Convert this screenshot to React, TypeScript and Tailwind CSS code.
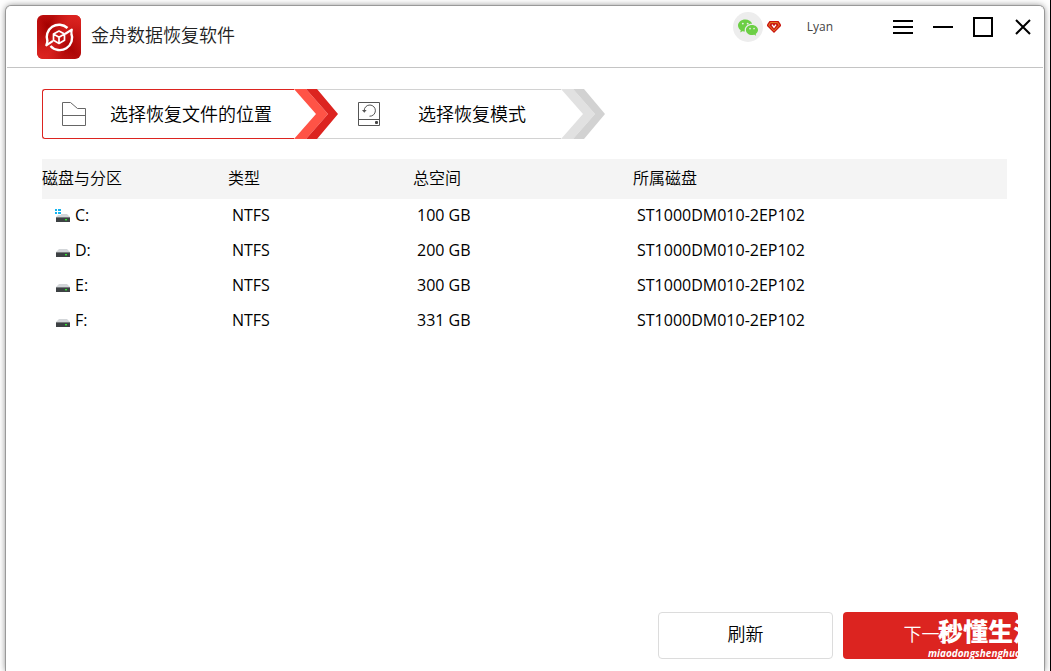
import { BsWechat } from "react-icons/bs";

const disks = [
  { name: "C:", type: "NTFS", size: "100 GB", model: "ST1000DM010-2EP102", system: true },
  { name: "D:", type: "NTFS", size: "200 GB", model: "ST1000DM010-2EP102", system: false },
  { name: "E:", type: "NTFS", size: "300 GB", model: "ST1000DM010-2EP102", system: false },
  { name: "F:", type: "NTFS", size: "331 GB", model: "ST1000DM010-2EP102", system: false },
];

const Logo = () => (
  <svg width="44" height="44" viewBox="0 0 44 44" fill="none" aria-hidden="true">
    <defs>
      <linearGradient id="logo-bg" x1="0" y1="8" x2="44" y2="36" gradientUnits="userSpaceOnUse">
        <stop offset="0" stopColor="#b80a0a" />
        <stop offset="0.2" stopColor="#a30000" />
        <stop offset="0.5" stopColor="#c91817" />
        <stop offset="0.75" stopColor="#a80202" />
        <stop offset="1" stopColor="#b00808" />
      </linearGradient>
      <linearGradient id="logo-top" x1="44" y1="0" x2="22" y2="22" gradientUnits="userSpaceOnUse">
        <stop offset="0" stopColor="#e02622" />
        <stop offset="1" stopColor="#e02622" stopOpacity="0" />
      </linearGradient>
      <linearGradient id="logo-bottom" x1="0" y1="44" x2="22" y2="22" gradientUnits="userSpaceOnUse">
        <stop offset="0" stopColor="#e02622" />
        <stop offset="1" stopColor="#e02622" stopOpacity="0" />
      </linearGradient>
    </defs>
    <rect width="44" height="44" rx="6" fill="url(#logo-bg)" />
    <rect width="44" height="44" rx="6" fill="url(#logo-top)" />
    <rect width="44" height="44" rx="6" fill="url(#logo-bottom)" />
    <g stroke="#fff" strokeLinejoin="round">
      <path d="M30.5 13A12.4 12.4 0 0 0 10.5 26.5" strokeWidth="2.4" />
      <path d="M13.5 31A12.4 12.4 0 0 0 34.2 18" strokeWidth="2.4" />
      <path d="M10.5 26L9.3 30.3L16 25.8M34.2 18L34.8 14.6L28 19" strokeWidth="2.2" />
      <path d="M22 16L27.5 19V25.3L22 28.5L16.5 25.3V19ZM16.5 19L22 22.2L27.5 19M22 22.2V28.5" strokeWidth="1.7" />
    </g>
  </svg>
);

const Gem = () => (
  <svg width="14" height="12" viewBox="0 0 14 12" aria-hidden="true">
    <path d="M2.5 0H11.5L14 3.5V5L7 12L0 5V3.5Z" fill="#c9150f" />
    <path d="M3.5 1.6H10.5L12.2 4.2L7 9.8L1.8 4.2Z" fill="none" stroke="#f0a62e" strokeWidth="0.8" />
    <path d="M5 3.6L7 6.4L9 3.6" fill="none" stroke="#fff" strokeWidth="1.3" />
  </svg>
);

const FolderIcon = () => (
  <svg width="24" height="24" viewBox="0 0 24 24" fill="none" stroke="#666" aria-hidden="true">
    <path d="M.5 .5H8.5L15.5 6.5H23.5V23.5H.5ZM.5 13.5H23.5" />
  </svg>
);

const RestoreIcon = () => (
  <svg width="22" height="24" viewBox="0 0 22 24" fill="none" stroke="#555" aria-hidden="true">
    <path d="M.5 .5H21.5V23.5H.5ZM.5 17.5H21.5" />
    <path d="M6.2 8.5A5.6 5.6 0 1 1 11.5 14.2" />
    <path d="M4 8H8.6L6.3 10.8Z" fill="#555" stroke="none" />
    <rect x="17" y="19" width="3" height="3" rx="1" fill="#444" stroke="none" />
  </svg>
);

const StepArrow = ({ light, dark }: { light: string; dark: string }) => (
  <svg className="relative z-10 shrink-0" width="44" height="50" viewBox="0 0 44 50" aria-hidden="true">
    <path d="M0 0H12L34 25L12 50H0L22 25Z" fill={light} />
    <path d="M12 0H23L44 25L23 50H12L34 25Z" fill={dark} />
  </svg>
);

const DriveIcon = ({ system }: { system: boolean }) => (
  <svg width="16" height="16" viewBox="0 0 16 16" className="shrink-0" aria-hidden="true">
    <path d="M4 7H12L15 10H1Z" fill="#d3d6d9" />
    <path d="M1 10H15V15H1Z" fill="#3d4144" />
    <path d="M1 10H15V11H1Z" fill="#777b7e" />
    <rect x="10" y="12" width="2" height="1.4" fill="#32e632" />
    {system && (
      <g>
        <path d="M0 1H6V8H0Z" fill="#fff" />
        <path d="M0 2H2V4H0ZM3 2H6V4H3ZM0 5H2V7H0ZM3 5H6V7H3Z" fill="#13b4f0" />
      </g>
    )}
  </svg>
);

const TitleBar = () => (
  <header className="flex h-[61px] items-start justify-between border-b border-[#c4c4c4]">
    <div className="flex h-[60px] items-center gap-[10px] pl-[30px]">
      <Logo />
      <h1 className="pb-1 text-[18px] font-[350] leading-6 text-[#222]">金舟数据恢复软件</h1>
    </div>
    <div className="flex h-10 items-center">
      <button type="button" aria-label="WeChat" className="flex size-[30px] items-center justify-center rounded-full bg-[#ededed]">
        <BsWechat size={20} className="text-[#6ccf45]" />
      </button>
      <span className="ml-1">
        <Gem />
      </span>
      <span className="mr-[50px] ml-[26px] text-[12px] text-[#444]">Lyan</span>
      <button type="button" aria-label="Menu" className="flex size-10 items-center justify-center">
        <svg width="20" height="14" viewBox="0 0 20 14">
          <path d="M0 0H20V2H0ZM0 6H20V8H0ZM0 12H20V14H0Z" />
        </svg>
      </button>
      <button type="button" aria-label="Minimize" className="flex size-10 items-center justify-center">
        <svg width="20" height="2" viewBox="0 0 20 2">
          <path d="M0 0H20V2H0Z" />
        </svg>
      </button>
      <button type="button" aria-label="Maximize" className="flex size-10 items-center justify-center">
        <svg width="20" height="20" viewBox="0 0 20 20" fill="none" stroke="#000" strokeWidth="2">
          <path d="M1 1H19V19H1Z" />
        </svg>
      </button>
      <button type="button" aria-label="Close" className="flex size-10 items-center justify-center">
        <svg width="16" height="16" viewBox="0 0 16 16" stroke="#000" strokeWidth="2">
          <path d="M1 1L15 15M15 1L1 15" />
        </svg>
      </button>
    </div>
  </header>
);

const Steps = () => (
  <ol className="flex text-[18px] font-[350] leading-6">
    <li className="flex">
      <div className="flex h-[50px] w-[252px] items-center gap-6 rounded-l-[3px] border border-r-0 border-[#dc2420] pl-[19px]">
        <FolderIcon />
        <span className="whitespace-nowrap">选择恢复文件的位置</span>
      </div>
      <StepArrow light="#ff5346" dark="#dc2420" />
    </li>
    <li className="-ml-[21px] flex">
      <div className="flex h-[50px] w-[244px] items-center gap-[38px] border-y border-[#d2d2d2] pl-[41px]">
        <RestoreIcon />
        <span className="whitespace-nowrap">选择恢复模式</span>
      </div>
      <StepArrow light="#e1e1e1" dark="#d2d2d2" />
    </li>
  </ol>
);

const DiskTable = () => (
  <table className="mt-5 w-full table-fixed text-left text-[16px] leading-6">
    <colgroup>
      <col className="w-[186px]" />
      <col className="w-[185px]" />
      <col className="w-[220px]" />
      <col />
    </colgroup>
    <thead>
      <tr className="h-10 bg-[#f4f4f4] *:pb-[2px] *:font-[350]">
        <th>磁盘与分区</th>
        <th>类型</th>
        <th>总空间</th>
        <th>所属磁盘</th>
      </tr>
    </thead>
    <tbody>
      {disks.map((disk) => (
        <tr key={disk.name} className="h-[35px] *:pb-[3px]">
          <td className="pl-[13px]">
            <div className="flex items-center gap-1">
              <DriveIcon system={disk.system} />
              {disk.name}
            </div>
          </td>
          <td className="pl-1">{disk.type}</td>
          <td className="pl-1">{disk.size}</td>
          <td className="pl-1">{disk.model}</td>
        </tr>
      ))}
    </tbody>
  </table>
);

const Watermark = () => (
  <div className="pointer-events-none absolute top-[5px] left-[85px] whitespace-nowrap text-white">
    <div className="pl-[10px] text-[25px] font-black leading-7">秒懂生活</div>
    <div className="text-[10px] font-bold italic leading-4">miaodongshenghuo.com</div>
  </div>
);

export default function App() {
  return (
    <div className="flex min-h-screen flex-col overflow-hidden border-r border-black bg-white pt-[6px] pr-[6px] pl-[6px] font-['Open_Sans','Noto_Sans_CJK_SC',sans-serif] text-black">
      <div className="flex flex-1 flex-col rounded-t-[5px] border border-b-0 border-white bg-white shadow-[0_0_0_1px_#999,0_0_7px_#777]">
        <TitleBar />
        <main className="flex-1 pt-[21px] pr-9 pl-[35px]">
          <Steps />
          <DiskTable />
        </main>
        <footer className="flex justify-end gap-[10px] pr-[25px] pb-3 text-[18px] font-[350] leading-6">
          <button type="button" className="h-[47px] w-[175px] rounded-[4px] border border-[#dcdcdc] pb-[3px]">
            刷新
          </button>
          <div className="relative">
            <button type="button" className="h-[47px] w-[175px] rounded-[4px] bg-[#dc2420] pb-[3px] text-white">
              下一步
            </button>
            <Watermark />
          </div>
        </footer>
      </div>
    </div>
  );
}
